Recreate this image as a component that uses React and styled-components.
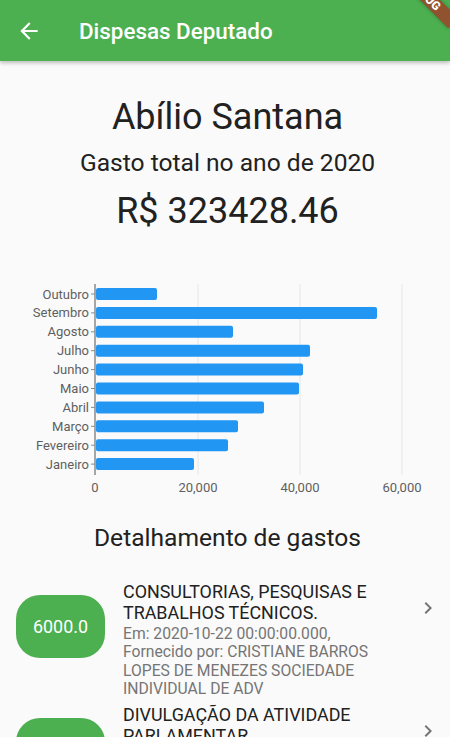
import React from "react";
import styled, { createGlobalStyle } from "styled-components";

const GlobalStyle = createGlobalStyle`
  body {
    margin: 0;
    background: #fafafa;
    font-family: Roboto, "Noto Sans", sans-serif;
    overflow: hidden;
  }
`;

const Page = styled.div`
  position: relative;
  width: 450px;
  height: 737px;
  overflow: hidden;
  background: #fafafa;
`;

const AppBar = styled.header`
  height: 61px;
  background: #4caf50;
  display: flex;
  align-items: center;
  box-shadow: 0 2px 4px rgba(0, 0, 0, 0.25);
  position: relative;
  z-index: 1;
`;

const BackButton = styled.div`
  width: 26px;
  height: 26px;
  margin-left: 16px;
  display: flex;
`;

const AppTitle = styled.h1`
  margin: 0 0 0 37px;
  font-size: 22.4px;
  font-weight: 500;
  color: #fff;
`;

const DebugBanner = styled.div`
  position: absolute;
  top: -12px;
  left: 385px;
  width: 80px;
  height: 14px;
  background: rgba(183, 28, 28, 0.63);
  color: #fff;
  font-size: 12px;
  font-weight: 900;
  line-height: 14px;
  text-align: center;
  transform: rotate(45deg);
  box-shadow: 0 0 4px rgba(0, 0, 0, 0.3);
  z-index: 2;
`;

const Header = styled.section`
  display: flex;
  flex-direction: column;
  align-items: center;
  padding: 35px 0 0 5px;
  color: #212121;
  line-height: normal;
`;

const Name = styled.div`
  font-size: 36px;
`;

const Caption = styled.div`
  font-size: 24.6px;
  margin-top: 10px;
`;

const Total = styled.div`
  font-size: 36px;
  margin-top: 13px;
`;

const ChartBox = styled.div`
  margin-top: 37px;
  height: 230px;
`;

const SectionTitle = styled.h2`
  margin: 24px 0 0;
  padding-left: 5px;
  text-align: center;
  font-size: 24.6px;
  line-height: normal;
  font-weight: 400;
  color: #212121;
`;

const List = styled.div`
  display: flex;
  flex-direction: column;
  gap: 5px;
  margin-top: 29px;
`;

const Item = styled.div`
  display: flex;
  align-items: flex-start;
  padding-left: 16px;
`;

const Amount = styled.div`
  flex: none;
  width: 89px;
  height: 63px;
  margin-top: 14px;
  border-radius: 24px;
  background: #4caf50;
  color: #fff;
  font-size: 17.9px;
  display: flex;
  align-items: center;
  justify-content: center;
`;

const Texts = styled.div`
  width: 264px;
  margin-left: 18px;
`;

const ItemTitle = styled.div`
  font-size: 17.9px;
  line-height: 21px;
  color: #212121;
`;

const ItemSub = styled.div`
  font-size: 15.7px;
  line-height: 18.4px;
  margin-top: 2px;
  color: #757575;
`;

const Chevron = styled.div`
  width: 24px;
  height: 24px;
  margin: 15px 10px 0 auto;
`;

const months = [
  { label: "Outubro", end: 157 },
  { label: "Setembro", end: 377 },
  { label: "Agosto", end: 233 },
  { label: "Julho", end: 310 },
  { label: "Junho", end: 303 },
  { label: "Maio", end: 299 },
  { label: "Abril", end: 264 },
  { label: "Março", end: 238 },
  { label: "Fevereiro", end: 228 },
  { label: "Janeiro", end: 194 },
];

const ticks = [
  { x: 95, text: "0" },
  { x: 198, text: "20,000" },
  { x: 300, text: "40,000" },
  { x: 402, text: "60,000" },
];

const expenses = [
  {
    value: "6000.0",
    title: "CONSULTORIAS, PESQUISAS E TRABALHOS TÉCNICOS.",
    sub: "Em: 2020-10-22 00:00:00.000, Fornecido por: CRISTIANE BARROS LOPES DE MENEZES SOCIEDADE INDIVIDUAL DE ADV",
  },
  {
    value: "5000.0",
    title: "DIVULGAÇÃO DA ATIVIDADE PARLAMENTAR.",
    sub: "Em: 2020-10-05 00:00:00.000, Fornecido por: GRAFICA E EDITORA",
  },
];

// chart coordinates are page x, page y - 270
const MonthChart = () => (
  <svg width="450" height="230" viewBox="0 0 450 230">
    {ticks.slice(1).map((t) => (
      <line key={t.x} x1={t.x} x2={t.x} y1={15} y2={206} stroke="#e6e6e6" strokeWidth="1" />
    ))}
    {months.map((m, i) => {
      const cy = 25 + i * 18.9;
      return (
        <g key={m.label}>
          <rect x={96} y={cy - 6} width={m.end - 96} height={12} rx={2} fill="#2196f3" />
          <line x1={91} x2={95} y1={cy} y2={cy} stroke="#8a8a8a" strokeWidth="1" />
          <text
            x={89}
            y={cy + 4.5}
            textAnchor="end"
            fontFamily="Roboto, sans-serif"
            fontSize="13"
            fill="#5f5f5f"
          >
            {m.label}
          </text>
        </g>
      );
    })}
    <line x1={95} x2={95} y1={15} y2={206} stroke="#8a8a8a" strokeWidth="1.5" />
    {ticks.map((t) => (
      <text
        key={t.text}
        x={t.x}
        y={223}
        textAnchor="middle"
        fontFamily="Roboto, sans-serif"
        fontSize="13"
        fill="#5f5f5f"
      >
        {t.text}
      </text>
    ))}
  </svg>
);

const App = () => {
  return (
    <Page>
      <GlobalStyle />
      <DebugBanner>DEBUG</DebugBanner>
      <AppBar>
        <BackButton>
          <svg width="26" height="26" viewBox="0 0 24 24">
            <path fill="#fff" d="M20 11H7.83l5.59-5.59L12 4l-8 8 8 8 1.41-1.41L7.83 13H20v-2z" />
          </svg>
        </BackButton>
        <AppTitle>Dispesas Deputado</AppTitle>
      </AppBar>

      <Header>
        <Name>Abílio Santana</Name>
        <Caption>Gasto total no ano de 2020</Caption>
        <Total>R$ 323428.46</Total>
      </Header>

      <ChartBox>
        <MonthChart />
      </ChartBox>

      <SectionTitle>Detalhamento de gastos</SectionTitle>

      <List>
        {expenses.map((e) => (
          <Item key={e.title}>
            <Amount>{e.value}</Amount>
            <Texts>
              <ItemTitle>{e.title}</ItemTitle>
              <ItemSub>{e.sub}</ItemSub>
            </Texts>
            <Chevron>
              <svg width="24" height="24" viewBox="0 0 24 24">
                <path fill="#757575" d="M8.59 16.59L13.17 12 8.59 7.41 10 6l6 6-6 6-1.41-1.41z" />
              </svg>
            </Chevron>
          </Item>
        ))}
      </List>
    </Page>
  );
};

export default App;
